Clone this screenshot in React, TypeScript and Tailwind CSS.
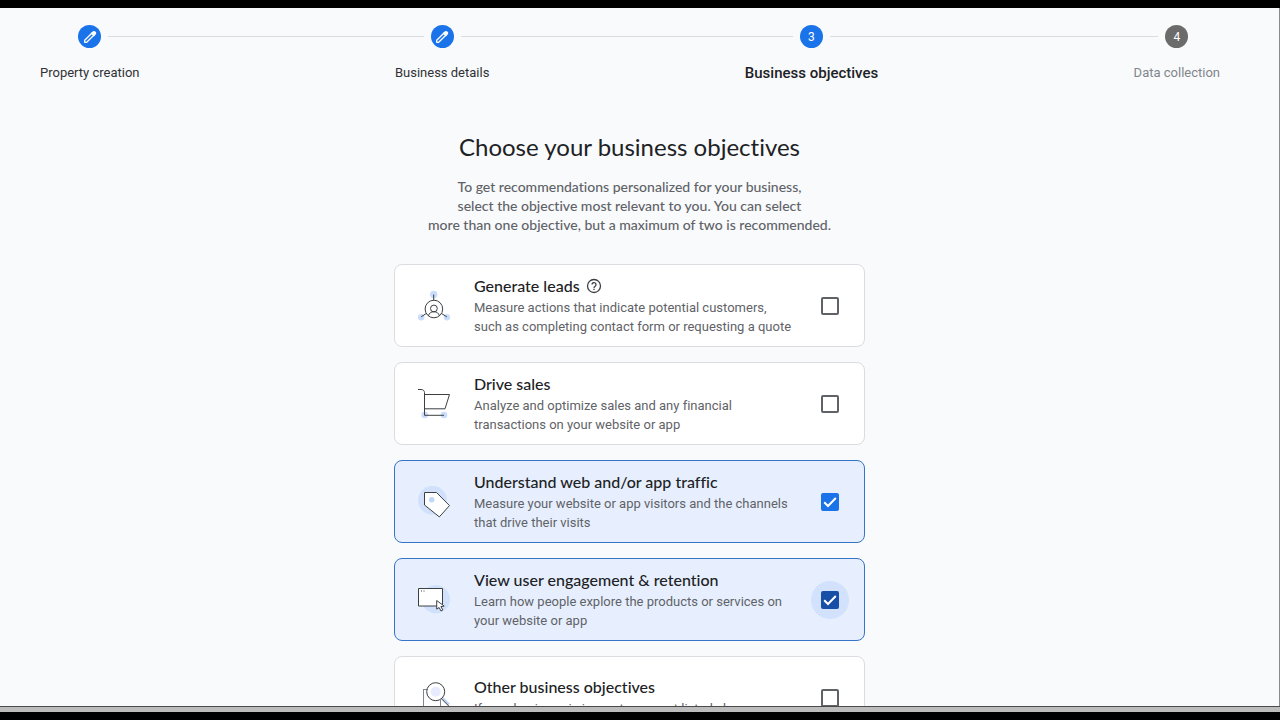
import { Fragment, useState } from "react";
import type { ReactNode } from "react";

type StepState = "done" | "current" | "upcoming";

const steps: { label: string; state: StepState }[] = [
  { label: "Property creation", state: "done" },
  { label: "Business details", state: "done" },
  { label: "Business objectives", state: "current" },
  { label: "Data collection", state: "upcoming" },
];

function PencilIcon() {
  return (
    <svg viewBox="0 0 16 16" className="size-4" fill="none" stroke="#fff" strokeWidth="1.3" aria-hidden="true">
      <path d="M2.700 13.300v-2L10.300 3.700l2 2L4.700 13.300z" strokeLinejoin="round" />
      <path d="M9.600 4.400l1.500-1.500a1.200 1.200 0 0 1 1.700 0l.4.400a1.200 1.200 0 0 1 0 1.700l-1.500 1.500z" fill="#fff" />
    </svg>
  );
}

function LeadsIcon() {
  return (
    <svg viewBox="0 0 32 32" className="size-8" fill="none" stroke="#3c4043" aria-hidden="true">
      <g fill="#c9dcfb" stroke="none">
        <circle cx="15.700" cy="4.500" r="3.700" />
        <circle cx="3.200" cy="27.300" r="3.200" />
        <circle cx="29" cy="27.300" r="3.200" />
      </g>
      <circle cx="15.900" cy="19" r="8.800" />
      <circle cx="15.900" cy="18.500" r="3.400" />
      <path d="M10.400 25.700c.8-2.600 2.700-4 5.500-4s4.700 1.400 5.500 4M15.700 4.500v5.700M8.300 23.500 3.200 26.800M23.500 23.500l5.400 3.400" />
    </svg>
  );
}

function CartIcon() {
  return (
    <svg viewBox="0 0 32 32" className="size-8" fill="none" stroke="#3c4043" aria-hidden="true">
      <g fill="#c9dcfb" stroke="none">
        <circle cx="6.700" cy="27" r="3.300" />
        <circle cx="26" cy="27" r="3.300" />
      </g>
      <path d="M0 1.500h3c2 0 3.500 1.200 3.500 3.200V27.300H26M6.500 6.500H31.500L27 20.800H6.500" />
    </svg>
  );
}

function TagIcon() {
  return (
    <svg viewBox="0 0 32 32" className="size-8" fill="none" stroke="#3c4043" aria-hidden="true">
      <circle cx="14.500" cy="14.300" r="14.500" fill="#d2e1fb" stroke="none" />
      <path d="M6.500 6.500H18.500L31.500 19.600 21.300 30.900 6.500 19z" fill="#fff" />
      <circle cx="13.700" cy="13.700" r="2.700" fill="#c0d6fa" stroke="none" />
    </svg>
  );
}

function WindowIcon() {
  return (
    <svg viewBox="0 0 32 32" className="size-8" fill="none" stroke="#3c4043" aria-hidden="true">
      <circle cx="17.800" cy="15.200" r="14.200" fill="#d2e1fb" stroke="none" />
      <path d="M.5 4.500h24v17.500H.5z" fill="#fff" />
      <path d="M3 7h1M5.500 7h1" />
      <path d="M18.700 16.500v8.600l2.400-1.600 1.900 3.500 1.800-1-1.900-3.400 3.300-.5z" fill="#fff" />
    </svg>
  );
}

function SearchDocIcon() {
  return (
    <svg viewBox="0 0 32 32" className="size-8" fill="none" stroke="#3c4043" aria-hidden="true">
      <path d="M5.500 7.500H14M5.500 7v23.500h17V18" stroke="#80868b" />
      <path d="M24.500 16.200l6.500 6.500" stroke="#bcd0f2" strokeWidth="2.500" />
      <path d="M23.700 17l7 7" />
      <circle cx="17.700" cy="9.700" r="9" fill="#fff" />
      <circle cx="17.700" cy="9.700" r="5" fill="#e8eafe" stroke="none" />
    </svg>
  );
}

function HelpIcon() {
  return (
    <svg viewBox="0 0 16 16" className="size-4" fill="none" stroke="#3c4043" strokeWidth="1.300" aria-hidden="true">
      <circle cx="8" cy="8" r="6.500" />
      <path d="M6 6.600a2 2 0 1 1 3.300 1.500c-.8.600-1.300.9-1.300 1.800" />
      <path d="M8 10.800v1.300" />
    </svg>
  );
}

interface Objective {
  id: string;
  title: string;
  description: string;
  icon: ReactNode;
  help?: boolean;
}

const objectives: Objective[] = [
  {
    id: "leads",
    title: "Generate leads",
    description: "Measure actions that indicate potential customers, such as completing contact form or requesting a quote",
    icon: <LeadsIcon />,
    help: true,
  },
  {
    id: "sales",
    title: "Drive sales",
    description: "Analyze and optimize sales and any financial transactions on your website or app",
    icon: <CartIcon />,
  },
  {
    id: "traffic",
    title: "Understand web and/or app traffic",
    description: "Measure your website or app visitors and the channels that drive their visits",
    icon: <TagIcon />,
  },
  {
    id: "engagement",
    title: "View user engagement & retention",
    description: "Learn how people explore the products or services on your website or app",
    icon: <WindowIcon />,
  },
  {
    id: "other",
    title: "Other business objectives",
    description: "If your business is in a category not listed above",
    icon: <SearchDocIcon />,
  },
];

const badgeStyles: Record<StepState, string> = {
  done: "bg-[#1a73e8]",
  current: "bg-[#1a73e8]",
  upcoming: "bg-[#6b6b6b]",
};

const labelStyles: Record<StepState, string> = {
  done: "text-[13px] text-[#303134]",
  current: "text-[15px] font-medium text-[#202124]",
  upcoming: "text-[13px] text-[#80868b]",
};

function Stepper() {
  const last = steps.length - 1;
  return (
    <ol className="flex pr-[59px] pl-10">
      {steps.map(({ label, state }, i) => (
        <Fragment key={label}>
          <li className="flex flex-col gap-[15px]" aria-current={state === "current" ? "step" : undefined}>
            <div className="flex items-center gap-[7px]">
              <span className={i > 0 ? "h-px flex-1 bg-[#dadce0]" : "flex-1"} />
              <span
                className={`flex size-[23px] items-center justify-center rounded-full text-xs text-white ${badgeStyles[state]}`}
              >
                {state === "done" ? <PencilIcon /> : i + 1}
              </span>
              <span className={i < last ? "h-px flex-1 bg-[#dadce0]" : "flex-1"} />
            </div>
            <span className={`leading-5 whitespace-nowrap ${labelStyles[state]}`}>{label}</span>
          </li>
          {i < last && <li aria-hidden="true" className="mt-[11px] h-px flex-1 bg-[#dadce0]" />}
        </Fragment>
      ))}
    </ol>
  );
}

interface CardProps {
  objective: Objective;
  checked: boolean;
  focused: boolean;
  onToggle: () => void;
}

function ObjectiveCard({ objective, checked, focused, onToggle }: CardProps) {
  const { id, title, description, icon, help } = objective;
  return (
    <li
      className={`flex min-h-[83px] items-center gap-6 rounded-lg border pr-[25px] pl-[23px] ${
        checked ? "border-[#3574c9] bg-[#e7effe]" : "border-[#dadce0] bg-white"
      }`}
    >
      <span className="shrink-0">{icon}</span>
      <div className="min-w-0 flex-1">
        <div className="mb-0.5 flex items-center gap-1.5">
          <label htmlFor={id} className="font-['Lato'] text-base leading-5 font-medium text-[#202124]">
            {title}
          </label>
          {help && (
            <button type="button" aria-label="About generating leads">
              <HelpIcon />
            </button>
          )}
        </div>
        <p id={`${id}-text`} className="max-w-80 text-[13px] leading-[19px] text-[#5f6368]">
          {description}
        </p>
      </div>
      <span
        className={`-m-[10px] grid size-[38px] shrink-0 place-items-center rounded-full ${focused ? "bg-[#d2e1fc]" : ""}`}
      >
        <input
          id={id}
          type="checkbox"
          checked={checked}
          onChange={onToggle}
          aria-describedby={`${id}-text`}
          className={`col-start-1 row-start-1 size-[18px] appearance-none rounded-[2px] border-2 ${
            !checked
              ? "border-[#5f6368] bg-transparent"
              : focused
                ? "border-[#174ea6] bg-[#174ea6]"
                : "border-[#1a73e8] bg-[#1a73e8]"
          }`}
        />
        {checked && (
          <svg
            viewBox="0 0 18 18"
            className="pointer-events-none col-start-1 row-start-1 size-[18px]"
            fill="none"
            stroke="#fff"
            strokeWidth="2"
            aria-hidden="true"
          >
            <path d="M3.200 9.200l3.800 3.800 7.800-8" />
          </svg>
        )}
      </span>
    </li>
  );
}

export default function App() {
  const [selected, setSelected] = useState<string[]>(["traffic", "engagement"]);
  const [active, setActive] = useState("engagement");

  const toggle = (id: string) => {
    setActive(id);
    setSelected((ids) => (ids.includes(id) ? ids.filter((other) => other !== id) : [...ids, id]));
  };

  return (
    <div className="flex h-screen flex-col border-y-8 border-black bg-[#f9fafc] font-['Roboto',sans-serif] [font-variant-ligatures:none]">
      <main className="min-h-0 flex-1 overflow-hidden border-r border-[#8a8a8a] pt-[17px]">
        <Stepper />
        <section className="mt-12 flex flex-col items-center pr-5">
          <h1 className="text-center font-['Lato'] text-2xl leading-8 text-[#202124]">
            Choose your business objectives
          </h1>
          <p className="mt-[14px] text-center font-['Lato'] text-sm leading-[19px] font-medium text-[#5f6368]">
            To get recommendations personalized for your business,
            <br />
            select the objective most relevant to you. You can select
            <br />
            more than one objective, but a maximum of two is recommended.
          </p>
          <ul className="mt-[30px] flex w-full max-w-[471px] flex-col gap-[15px]">
            {objectives.map((objective) => (
              <ObjectiveCard
                key={objective.id}
                objective={objective}
                checked={selected.includes(objective.id)}
                focused={active === objective.id}
                onToggle={() => toggle(objective.id)}
              />
            ))}
          </ul>
        </section>
      </main>
      <div className="h-[6px] shrink-0 border-t border-[#4a4a4a] bg-[#bcbcbc]" />
    </div>
  );
}
